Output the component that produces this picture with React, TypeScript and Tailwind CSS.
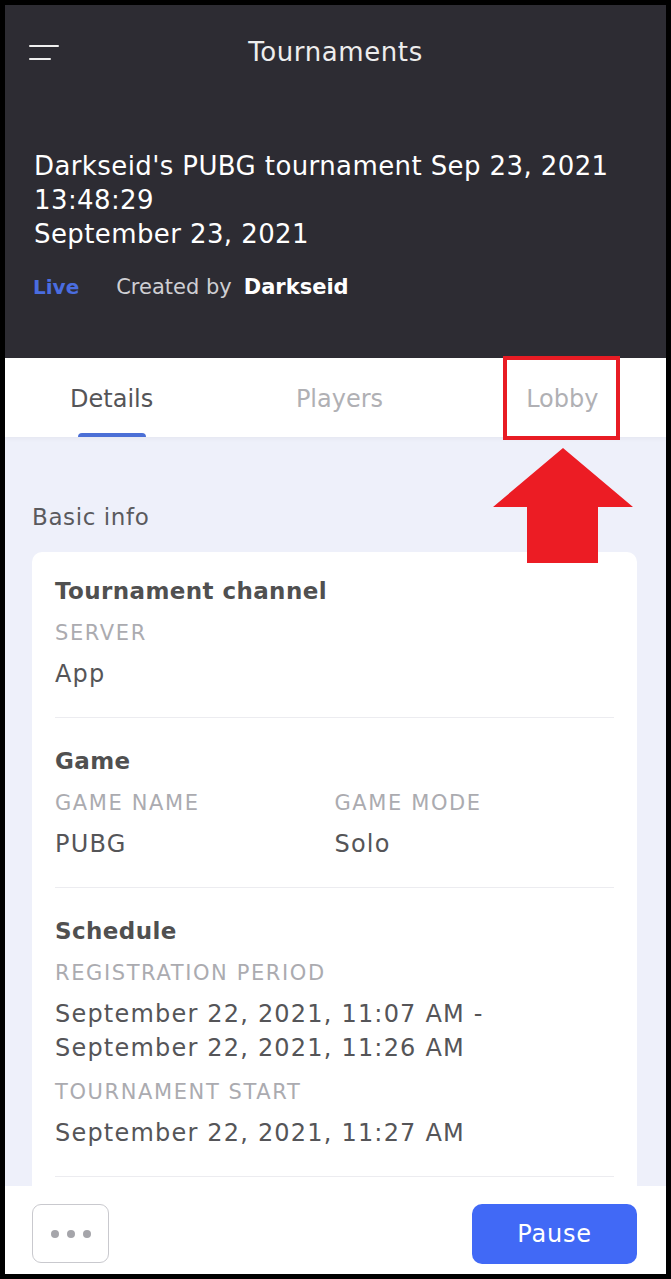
import React from 'react';

const font = { fontFamily: '"DejaVu Sans", "Noto Sans", sans-serif' };

type Field = { label: string; value: React.ReactNode };

const Section: React.FC<{ title: string; first?: boolean; children: React.ReactNode }> = ({
  title,
  first,
  children,
}) => (
  <div className={`border-b border-[#ececf0] pb-[26px] ${first ? 'pt-[25px]' : 'pt-[29px]'}`}>
    <h3 className="text-[23px] font-bold leading-[28px] tracking-[0.4px] text-[#505050]">{title}</h3>
    {children}
  </div>
);

const FieldBlock: React.FC<Field & { labelGap?: string }> = ({ label, value, labelGap = 'mt-[16px]' }) => (
  <div>
    <div className={`${labelGap} text-[21px] leading-[24px] tracking-[1.6px] text-[#ababb0]`}>{label}</div>
    <div className="mt-[12px] text-[24px] leading-[34px] tracking-[1.2px] text-[#555558]">{value}</div>
  </div>
);

const App: React.FC = () => {
  return (
    <div className="h-[1279px] w-[671px] bg-black p-[5px]" style={font}>
      <div className="relative flex h-full flex-col overflow-hidden bg-[#eef0fa]">
        {/* Header */}
        <header className="h-[353px] bg-[#2d2c33] px-[29px]">
          <div className="relative flex h-[94px] items-center justify-center">
            <div className="absolute left-[-5px] top-[40px] flex flex-col gap-[11px]">
              <span className="block h-[2px] w-[30px] rounded bg-[#f0f0f0]" />
              <span className="block h-[2px] w-[22px] rounded bg-[#f0f0f0]" />
            </div>
            <h1 className="text-[26px] tracking-[0.6px] text-[#ededed]">Tournaments</h1>
          </div>
          <div className="mt-[50px] pr-[10px] text-[26px] leading-[34px] tracking-[0.4px] text-white">
            <p>Darkseid's PUBG tournament Sep 23, 2021 13:48:29</p>
            <p>September 23, 2021</p>
          </div>
          <div className="mt-[24px] flex items-center text-[21px] leading-[24px]">
            <span className="ml-[-1px] text-[20px] font-bold text-[#4a6de0]">Live</span>
            <span className="ml-[37px] text-[#cfcfd3]">Created by</span>
            <span className="ml-[12px] font-bold text-white">Darkseid</span>
          </div>
        </header>

        {/* Tabs */}
        <nav className="grid h-[79px] grid-cols-3 bg-white text-[24px] shadow-[0_2px_4px_rgba(0,0,0,0.04)]">
          <div className="relative flex items-center justify-center pr-[7px] pt-[3px]">
            <span className="text-[#555558]">Details</span>
            <span className="absolute bottom-0 left-[73px] h-[4px] w-[68px] rounded-t bg-[#4b6fd6]" />
          </div>
          <div className="flex items-center justify-center pl-[8px] pt-[3px]">
            <span className="text-[#b0b0b4]">Players</span>
          </div>
          <div className="flex items-center justify-center pl-[13px] pt-[3px]">
            <span className="text-[#b0b0b4]">Lobby</span>
          </div>
        </nav>

        {/* Content */}
        <main className="flex-1 overflow-hidden px-[27px] pt-[66px]">
          <h2 className="text-[23px] leading-[28px] tracking-[0.6px] text-[#5a5a5e]">Basic info</h2>
          <div className="mt-[21px] w-[605px] rounded-[10px] bg-white px-[23px]">
            <Section title="Tournament channel" first>
              <FieldBlock label="SERVER" value="App" />
            </Section>
            <Section title="Game">
              <div className="grid grid-cols-2">
                <FieldBlock label="GAME NAME" value="PUBG" />
                <FieldBlock label="GAME MODE" value="Solo" />
              </div>
            </Section>
            <Section title="Schedule">
              <FieldBlock
                label="REGISTRATION PERIOD"
                value={
                  <>
                    September 22, 2021, 11:07 AM -<br />
                    September 22, 2021, 11:26 AM
                  </>
                }
              />
              <FieldBlock label="TOURNAMENT START" value="September 22, 2021, 11:27 AM" labelGap="mt-[15px]" />
            </Section>
            <div className="h-[40px]" />
          </div>
        </main>

        {/* Bottom bar */}
        <footer className="flex h-[88px] shrink-0 items-start justify-between bg-white pl-[27px] pr-[29px] pt-[18px]">
          <button className="flex h-[59px] w-[77px] items-center justify-center gap-[8px] rounded-[9px] border-[1.5px] border-[#c9c9ce]">
            <span className="h-[8px] w-[8px] rounded-full bg-[#a5a5aa]" />
            <span className="h-[8px] w-[8px] rounded-full bg-[#a5a5aa]" />
            <span className="h-[8px] w-[8px] rounded-full bg-[#a5a5aa]" />
          </button>
          <button className="flex h-[60px] w-[165px] items-center justify-center rounded-[10px] bg-[#4169f6] text-[24px] tracking-[0.8px] text-white">
            Pause
          </button>
        </footer>

        {/* Annotation: highlight box + arrow */}
        <div className="absolute left-[498px] top-[351px] h-[84px] w-[117px] border-[4px] border-[#e81c24]" />
        <svg
          className="absolute left-[487px] top-[442px]"
          width="142"
          height="118"
          viewBox="0 0 142 118"
        >
          <path d="M71 1 L141 60 L106 60 L106 116 L35 116 L35 60 L1 60 Z" fill="#ec1c24" />
        </svg>
      </div>
    </div>
  );
};

export default App;
